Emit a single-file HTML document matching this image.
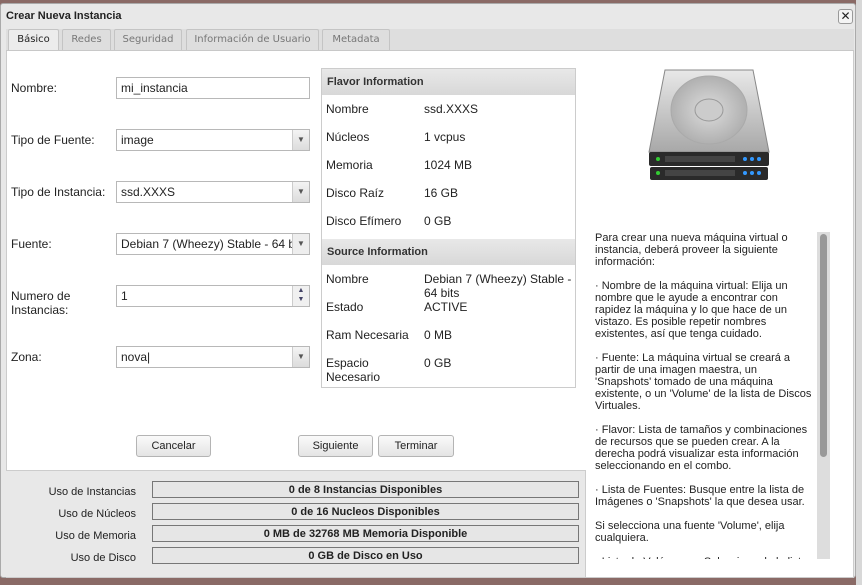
<!DOCTYPE html>
<html><head><meta charset="utf-8"><style>
*{box-sizing:border-box;margin:0;padding:0}
body{width:862px;height:585px;overflow:hidden;background:#8a6a66;font-family:"Liberation Sans",sans-serif;font-size:12px;color:#222;position:relative}
.a{position:absolute}
#dlg{left:0;top:3px;width:856px;height:575px;background:#e8e8e8;border:1px solid #aaa;border-radius:3px}
#out{left:856px;top:0;width:6px;height:585px;background:#d8d8d8}
.tab{position:absolute;top:29px;height:21px;border:1px solid #c4c4c4;border-bottom:none;background:#dedede;color:#777;font-size:10px;text-align:center;line-height:19px;border-radius:2px 2px 0 0;font-family:"DejaVu Sans",sans-serif;white-space:nowrap}
.lbl{position:absolute;left:11px;font-size:12px}
.in{position:absolute;left:116px;width:194px;height:22px;border:1px solid #b8b8b8;background:#fff;padding-left:4px;line-height:20px;font-size:12px;white-space:nowrap;overflow:hidden}
.dd{position:absolute;right:0;top:0;width:17px;height:20px;background:linear-gradient(#f4f4f4,#dcdcdc);border-left:1px solid #ccc;text-align:center;font-size:8px;color:#555;line-height:20px}
.fi{position:absolute;left:326px;font-size:12px}
.fv{position:absolute;left:424px;font-size:12px}
.hd{position:absolute;left:322px;width:253px;height:26px;background:linear-gradient(#e8e8e8,#d8d8d8);font-weight:bold;font-size:11px;padding-left:5px;line-height:26px;color:#333}
.btn{position:absolute;top:435px;height:22px;border:1px solid #b4b4b4;border-radius:3px;background:linear-gradient(#fafafa,#e4e4e4);text-align:center;line-height:20px;font-size:11px}
.ul{position:absolute;width:130px;left:6px;text-align:right;font-size:11px}
.bar{position:absolute;left:152px;width:427px;height:17px;border:1px solid #777;background:#e6e6e6;text-align:center;font-weight:bold;font-size:11px;line-height:17px}
#help{left:595px;top:232px;width:220px;font-size:11px;line-height:12px;height:327px;overflow:hidden}
#help p{margin-bottom:12px}
</style></head><body>
<div class="a" id="out"></div>
<div class="a" id="dlg"></div>
<div class="a" style="left:6px;top:10px;font-weight:bold;font-size:11px">Crear Nueva Instancia</div>
<div class="a" style="left:838px;top:9px;width:15px;height:15px;border:1px solid #999;border-radius:3px;background:#f4f4f4;text-align:center;line-height:13px;font-size:12px">✕</div>
<div class="a" style="left:6px;top:29px;width:848px;height:22px;background:#dedede;border-bottom:1px solid #c8c8c8"></div>
<div class="tab" style="left:8px;width:51px;background:#ececec;color:#222">Básico</div>
<div class="tab" style="left:62px;width:49px">Redes</div>
<div class="tab" style="left:114px;width:68px">Seguridad</div>
<div class="tab" style="left:186px;width:133px">Información de Usuario</div>
<div class="tab" style="left:322px;width:68px">Metadata</div>
<div class="a" style="left:6px;top:51px;width:848px;height:527px;background:#fff;border:1px solid #ccc;border-top:none"></div>

<div class="lbl" style="top:81px">Nombre:</div>
<div class="lbl" style="top:133px">Tipo de Fuente:</div>
<div class="lbl" style="top:185px">Tipo de Instancia:</div>
<div class="lbl" style="top:237px">Fuente:</div>
<div class="lbl" style="top:289px;line-height:14px">Numero de<br>Instancias:</div>
<div class="lbl" style="top:350px">Zona:</div>
<div class="in" style="top:77px">mi_instancia</div>
<div class="in" style="top:129px">image<div class="dd">▼</div></div>
<div class="in" style="top:181px">ssd.XXXS<div class="dd">▼</div></div>
<div class="in" style="top:233px">Debian 7 (Wheezy) Stable - 64 bits<div class="dd" style="background:#eee">▼</div></div>
<div class="in" style="top:285px">1<div class="dd" style="line-height:9px;color:#446;font-size:7px;background:#f0f0f0">▲<br>▼</div></div>
<div class="in" style="top:346px">nova|<div class="dd">▼</div></div>

<div class="a" style="left:321px;top:68px;width:255px;height:320px;border:1px solid #ccc"></div>
<div class="hd" style="top:69px">Flavor Information</div>
<div class="fi" style="top:102px">Nombre</div><div class="fv" style="top:102px">ssd.XXXS</div>
<div class="fi" style="top:130px">Núcleos</div><div class="fv" style="top:130px">1 vcpus</div>
<div class="fi" style="top:158px">Memoria</div><div class="fv" style="top:158px">1024 MB</div>
<div class="fi" style="top:186px">Disco Raíz</div><div class="fv" style="top:186px">16 GB</div>
<div class="fi" style="top:214px">Disco Efímero</div><div class="fv" style="top:214px">0 GB</div>
<div class="hd" style="top:239px">Source Information</div>
<div class="fi" style="top:272px">Nombre</div><div class="fv" style="top:272px;line-height:14px">Debian 7 (Wheezy) Stable -<br>64 bits<br>ACTIVE</div>
<div class="fi" style="top:300px">Estado</div>
<div class="fi" style="top:328px">Ram Necesaria</div><div class="fv" style="top:328px">0 MB</div>
<div class="fi" style="top:356px;line-height:14px">Espacio<br>Necesario</div><div class="fv" style="top:356px">0 GB</div>

<div class="btn" style="left:136px;width:75px">Cancelar</div>
<div class="btn" style="left:298px;width:75px">Siguiente</div>
<div class="btn" style="left:378px;width:76px">Terminar</div>

<div class="a" style="left:6px;top:470px;width:580px;height:107px;background:#e8e8e8;border-top:1px solid #ccc;border-right:1px solid #ccc"></div>
<div class="ul" style="top:486px">Uso de Instancias</div><div class="bar" style="top:481px">0 de 8 Instancias Disponibles</div>
<div class="ul" style="top:508px">Uso de Núcleos</div><div class="bar" style="top:503px">0 de 16 Nucleos Disponibles</div>
<div class="ul" style="top:530px">Uso de Memoria</div><div class="bar" style="top:525px">0 MB de 32768 MB Memoria Disponible</div>
<div class="ul" style="top:552px">Uso de Disco</div><div class="bar" style="top:547px">0 GB de Disco en Uso</div>

<svg class="a" style="left:645px;top:66px" width="130" height="115" viewBox="0 0 130 115">
<defs><linearGradient id="g" x1="0" y1="0" x2="0" y2="1"><stop offset="0" stop-color="#e8e8e8"/><stop offset="1" stop-color="#a8a8a8"/></linearGradient>
<radialGradient id="r"><stop offset="0" stop-color="#ddd"/><stop offset="1" stop-color="#b0b0b0"/></radialGradient></defs>
<path d="M20 4 L108 4 L124 86 L4 86 Z" fill="url(#g)" stroke="#888"/>
<ellipse cx="64" cy="44" rx="38" ry="34" fill="url(#r)" stroke="#aaa"/>
<ellipse cx="64" cy="44" rx="14" ry="11" fill="#ccc" stroke="#999"/>
<rect x="4" y="86" width="120" height="14" rx="2" fill="#2a2a2a"/>
<rect x="5" y="101" width="118" height="13" rx="2" fill="#2a2a2a"/>
<circle cx="13" cy="93" r="2" fill="#3c3"/><circle cx="13" cy="107" r="2" fill="#3c3"/>
<rect x="20" y="90" width="70" height="6" fill="#444"/><rect x="20" y="104" width="70" height="6" fill="#444"/>
<circle cx="100" cy="93" r="2" fill="#39f"/><circle cx="107" cy="93" r="2" fill="#39f"/><circle cx="114" cy="93" r="2" fill="#39f"/>
<circle cx="100" cy="107" r="2" fill="#39f"/><circle cx="107" cy="107" r="2" fill="#39f"/><circle cx="114" cy="107" r="2" fill="#39f"/>
</svg>

<div class="a" id="help">
<p>Para crear una nueva máquina virtual o instancia, deberá proveer la siguiente información:</p>
<p>· Nombre de la máquina virtual: Elija un nombre que le ayude a encontrar con rapidez la máquina y lo que hace de un vistazo. Es posible repetir nombres existentes, así que tenga cuidado.</p>
<p>· Fuente: La máquina virtual se creará a partir de una imagen maestra, un 'Snapshots' tomado de una máquina existente, o un 'Volume' de la lista de Discos Virtuales.</p>
<p>· Flavor: Lista de tamaños y combinaciones de recursos que se pueden crear. A la derecha podrá visualizar esta información seleccionando en el combo.</p>
<p>· Lista de Fuentes: Busque entre la lista de Imágenes o 'Snapshots' la que desea usar.</p>
<p>Si selecciona una fuente 'Volume', elija cualquiera.</p>
<p>· Lista de Volúmenes: Seleccione de la lista</p>
</div>
<div class="a" style="left:817px;top:232px;width:13px;height:327px;background:#ddd"></div>
<div class="a" style="left:820px;top:234px;width:7px;height:223px;background:#999;border-radius:4px"></div>
</body></html>
